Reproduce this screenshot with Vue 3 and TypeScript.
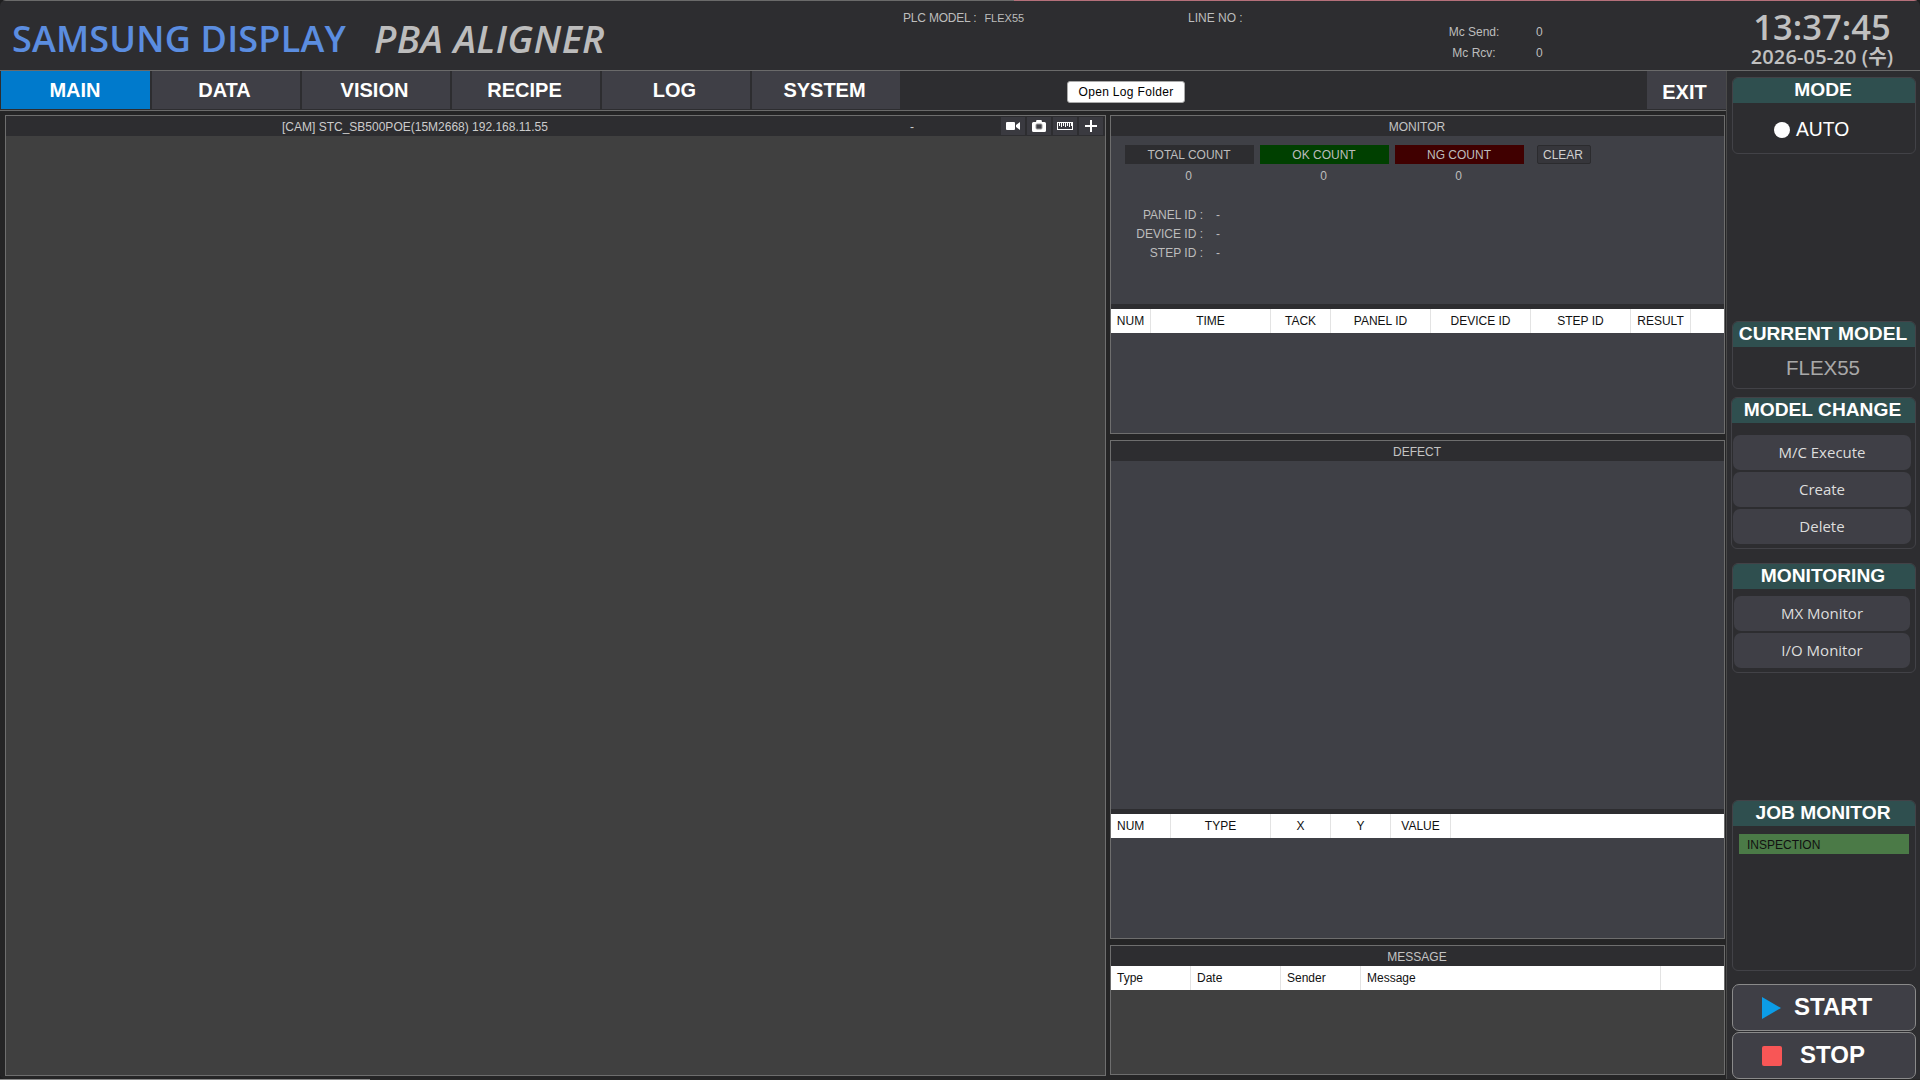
<script setup lang="ts">
const tabs = ["MAIN", "DATA", "VISION", "RECIPE", "LOG", "SYSTEM"];

const counts = [
  { label: "TOTAL COUNT", cls: "total" },
  { label: "OK COUNT", cls: "ok" },
  { label: "NG COUNT", cls: "ng" },
];

const idRows = ["PANEL ID :", "DEVICE ID :", "STEP ID :"];

interface Col {
  label: string;
  width: number;
  left?: boolean;
}

const monitorCols: Col[] = [
  { label: "NUM", width: 40 },
  { label: "TIME", width: 120 },
  { label: "TACK", width: 60 },
  { label: "PANEL ID", width: 100 },
  { label: "DEVICE ID", width: 100 },
  { label: "STEP ID", width: 100 },
  { label: "RESULT", width: 60 },
];

const defectCols: Col[] = [
  { label: "NUM", width: 60, left: true },
  { label: "TYPE", width: 100 },
  { label: "X", width: 60 },
  { label: "Y", width: 60 },
  { label: "VALUE", width: 60 },
];

const messageCols: Col[] = [
  { label: "Type", width: 80, left: true },
  { label: "Date", width: 90, left: true },
  { label: "Sender", width: 80, left: true },
  { label: "Message", width: 300, left: true },
];

const rulerTicks = [2, 4, 6, 8, 10, 12, 14];
</script>

<template>
  <div class="screen">
    <div class="window">
      <div class="topline"><i class="grey"></i><i class="pink"></i></div>

      <header class="header">
        <div class="brand">SAMSUNG DISPLAY</div>
        <div class="product">PBA ALIGNER</div>
        <div class="plc"><span class="plcLabel">PLC MODEL :</span><span class="plcValue">FLEX55</span></div>
        <div class="line">LINE NO :</div>
        <div class="mc">
          <div class="mcRow"><span class="mcLabel">Mc Send:</span><span>0</span></div>
          <div class="mcRow"><span class="mcLabel">Mc Rcv:</span><span>0</span></div>
        </div>
        <div class="clock">
          <div class="time">13:37:45</div>
          <div class="date">2026-05-20 (수)</div>
        </div>
      </header>

      <div class="main">
        <div class="left">
          <nav class="nav">
            <div v-for="(t, i) in tabs" :key="t" class="tab" :class="{ active: i === 0 }">{{ t }}</div>
            <div class="navMid"><button class="logBtn">Open Log Folder</button></div>
            <div class="exit">EXIT</div>
          </nav>

          <div class="body">
            <section class="panel cam">
              <div class="camBar">
                <span class="camName">[CAM] STC_SB500POE(15M2668) 192.168.11.55</span>
                <span class="camDash">-</span>
                <div class="camTools">
                  <div class="tool">
                    <svg width="14" height="8" viewBox="0 0 14 8"><rect x="0" y="0" width="9" height="8" rx="1" fill="#fff" /><path d="M10 3 L14 0 V8 L10 5 Z" fill="#fff" /></svg>
                  </div>
                  <div class="tool">
                    <svg width="14" height="12" viewBox="0 0 14 12"><path d="M1.5 2 H4 L4.5 0 H9.5 L10 2 H12.5 Q14 2 14 3.5 V10.5 Q14 12 12.5 12 H1.5 Q0 12 0 10.5 V3.5 Q0 2 1.5 2 Z" fill="#fff" /><rect x="4" y="4" width="6" height="5" rx="1" fill="#3f3f46" stroke="#999" /></svg>
                  </div>
                  <div class="tool">
                    <svg width="16" height="8" viewBox="0 0 16 8"><rect x="0.5" y="0.5" width="15" height="7" fill="none" stroke="#fff" /><path v-for="x in rulerTicks" :key="x" :d="`M${x + 0.5} 1 V${x % 4 === 0 ? 5 : 4}`" stroke="#fff" /></svg>
                  </div>
                  <div class="tool">
                    <svg width="12" height="12" viewBox="0 0 12 12"><path d="M6 0 V12 M0 6 H12" stroke="#fff" stroke-width="2" /></svg>
                  </div>
                </div>
              </div>
              <div class="camView"></div>
            </section>

            <div class="stack">
              <section class="panel monitor">
                <div class="title">MONITOR</div>
                <div class="monitorBody">
                  <div class="countRow">
                    <div v-for="c in counts" :key="c.label" class="count">
                      <div class="countHead" :class="c.cls">{{ c.label }}</div>
                      <div class="countVal">0</div>
                    </div>
                    <button class="clear">CLEAR</button>
                  </div>
                  <div class="ids">
                    <div v-for="r in idRows" :key="r" class="idRow">
                      <span class="idLabel">{{ r }}</span><span>-</span>
                    </div>
                  </div>
                </div>
                <div class="strip"></div>
                <div class="thead">
                  <div v-for="c in monitorCols" :key="c.label" class="th" :style="{ width: c.width + 'px' }">{{ c.label }}</div>
                </div>
                <div class="fill"></div>
              </section>

              <section class="panel defect">
                <div class="title">DEFECT</div>
                <div class="defectView"></div>
                <div class="strip"></div>
                <div class="thead">
                  <div v-for="c in defectCols" :key="c.label" class="th" :class="{ thLeft: c.left }" :style="{ width: c.width + 'px' }">{{ c.label }}</div>
                </div>
                <div class="fill"></div>
              </section>

              <section class="panel message">
                <div class="title">MESSAGE</div>
                <div class="thead">
                  <div v-for="c in messageCols" :key="c.label" class="th thLeft" :style="{ width: c.width + 'px' }">{{ c.label }}</div>
                </div>
                <div class="fill grey"></div>
              </section>
            </div>
          </div>
        </div>

        <aside class="side">
          <div class="group mode">
            <div class="groupHead">MODE</div>
            <div class="auto"><i class="dot"></i>AUTO</div>
          </div>

          <div class="group current">
            <div class="groupHead">CURRENT MODEL</div>
            <div class="modelName">FLEX55</div>
          </div>

          <div class="group change">
            <div class="groupHead">MODEL CHANGE</div>
            <div class="btns">
              <button class="sideBtn">M/C Execute</button>
              <button class="sideBtn">Create</button>
              <button class="sideBtn">Delete</button>
            </div>
          </div>

          <div class="group monitoring">
            <div class="groupHead">MONITORING</div>
            <div class="btns">
              <button class="sideBtn">MX Monitor</button>
              <button class="sideBtn">I/O Monitor</button>
            </div>
          </div>

          <div class="group job">
            <div class="groupHead">JOB MONITOR</div>
            <div class="jobBar">INSPECTION</div>
          </div>

          <div class="actions">
            <button class="action">
              <svg width="19" height="22" viewBox="0 0 19 22"><path d="M0 0 L19 11 L0 22 Z" fill="#0c9ce6" /></svg>
              <span>START</span>
            </button>
            <button class="action stop">
              <i class="square"></i>
              <span>STOP</span>
            </button>
          </div>
        </aside>
      </div>
    </div>
    <div class="desktop"><i class="pale"></i></div>
  </div>
</template>

<style>
html,
body {
  margin: 0;
  background: #1f1f20;
}
</style>

<style scoped>
.screen {
  width: 1920px;
  height: 1080px;
  overflow: hidden;
  display: flex;
  flex-direction: column;
  font-family: "Liberation Sans", Arial, sans-serif;
  background: #1f1f20;
}

.window {
  flex: 1;
  min-height: 0;
  display: flex;
  flex-direction: column;
  background: #2d2d30;
  overflow: hidden;
  border-radius: 6px 6px 0 6px;
}

.desktop {
  height: 1px;
  display: flex;
  background: #262626;
}

.pale {
  width: 370px;
  background: #8a8a8a;
}

.topline {
  height: 1px;
  display: flex;
}

.topline .grey {
  width: 1014px;
  background: #6a6a6a;
}

.topline .pink {
  flex: 1;
  background: #b5707a;
}

.header {
  height: 69px;
  flex: none;
  display: flex;
  color: #bdbdbd;
  border-bottom: 1px solid #6a6a6a;
  box-sizing: content-box;
}

.brand {
  margin: 15px 0 0 12px;
  width: 362px;
  font: 600 36px/46px "Open Sans", sans-serif;
  letter-spacing: 0.2px;
  color: #5b8de0;
  white-space: nowrap;
}

.product {
  width: 529px;
  margin-top: 14px;
  font: italic 600 38px/46px "Open Sans", sans-serif;
  letter-spacing: 0.35px;
  color: #bcbcbc;
  white-space: nowrap;
}

.plc {
  width: 285px;
  margin-top: 10px;
  font-size: 12px;
  line-height: 14px;
  white-space: nowrap;
}

.plcLabel {
  letter-spacing: -0.2px;
}

.plcValue {
  margin-left: 8px;
  font-size: 11px;
}

.line {
  width: 260px;
  margin-top: 10px;
  font-size: 12px;
  line-height: 14px;
}

.mc {
  width: 302px;
  margin-top: 24px;
  font-size: 12px;
}

.mcRow {
  height: 21px;
  display: flex;
  line-height: 14px;
}

.mcLabel {
  width: 60px;
  text-align: center;
  margin-right: 32px;
  flex: none;
  margin-left: -4px;
}

.clock {
  flex: 1;
  text-align: center;
  margin-left: -26px;
  margin-top: 8px;
  color: #c0c0c0;
  font-family: "Open Sans", "Noto Sans CJK KR", sans-serif;
  font-weight: 600;
}

.time {
  font-size: 34.5px;
  line-height: 36px;
}

.date {
  font-size: 20px;
  line-height: 24px;
  letter-spacing: 0.15px;
  white-space: nowrap;
}

.main {
  flex: 1;
  min-height: 0;
  display: flex;
}

.left {
  width: 1727px;
  flex: none;
  display: flex;
  flex-direction: column;
  background: #252526;
  border-right: 1px solid #4a4a4a;
  box-sizing: border-box;
}

.nav {
  height: 40px;
  flex: none;
  display: flex;
  padding: 0 0 0 1px;
  gap: 2px;
  box-sizing: border-box;
  background: #2d2d30;
  border-bottom: 1px solid #6a6a6a;
}

.tab {
  width: 148px;
  height: 38px;
  box-sizing: border-box;
  padding-right: 3px;
  background: #3f3f46;
  color: #fff;
  font-size: 20px;
  font-weight: 700;
  line-height: 38px;
  text-align: center;
}

.tab.active {
  width: 149px;
  padding-right: 1px;
  background: #007acc;
}

.navMid {
  width: 743px;
  display: flex;
  padding: 10px 0 0 165px;
  box-sizing: border-box;
  align-items: flex-start;
}

.logBtn {
  width: 118px;
  height: 22px;
  padding: 0;
  background: #fff;
  border: 1px solid #aaa;
  border-radius: 3px;
  color: #000;
  font: 12px "Liberation Sans", Arial, sans-serif;
  letter-spacing: 0.33px;
}

.exit {
  width: 79px;
  height: 38px;
  box-sizing: border-box;
  padding-right: 4px;
  background: #3f3f46;
  color: #fff;
  font-size: 20px;
  font-weight: 700;
  line-height: 42px;
  text-align: center;
}

.body {
  flex: 1;
  min-height: 0;
  display: flex;
  gap: 4px;
  padding: 4px 1px 3px 5px;
}

.panel {
  display: flex;
  flex-direction: column;
  border: 1px solid #6e6e6e;
  background: #3f4046;
  box-sizing: border-box;
}

.cam {
  width: 1101px;
  flex: none;
}

.camBar {
  height: 20px;
  flex: none;
  display: flex;
  align-items: center;
  background: #2d2d30;
  color: #ccc;
  font-size: 12px;
}

.camName {
  width: 820px;
  padding: 1px 0 0 276px;
  box-sizing: border-box;
  white-space: nowrap;
}

.camDash {
  width: 175px;
  padding: 1px 0 0 84px;
  box-sizing: border-box;
}

.camTools {
  display: flex;
  gap: 2px;
}

.tool {
  width: 24px;
  height: 18px;
  background: #3a3a40;
  display: flex;
  align-items: center;
  justify-content: center;
}

.camView {
  flex: 1;
  background: #404040;
}

.stack {
  width: 615px;
  flex: none;
  display: flex;
  flex-direction: column;
  gap: 6px;
}

.monitor {
  height: 319px;
  flex: none;
}

.defect {
  height: 499px;
  flex: none;
}

.message {
  height: 130px;
  flex: none;
}

.title {
  height: 20px;
  flex: none;
  box-sizing: border-box;
  padding-right: 1px;
  background: #2d2d30;
  color: #c4c4c4;
  font-size: 12px;
  line-height: 22px;
  text-align: center;
}

.monitorBody {
  height: 168px;
  flex: none;
  box-sizing: border-box;
  padding: 9px 0 0 14px;
  color: #bdbdbd;
  font-size: 12px;
}

.countRow {
  display: flex;
  gap: 6px;
  align-items: flex-start;
}

.count {
  width: 129px;
}

.countHead {
  height: 19px;
  box-sizing: border-box;
  padding-right: 1px;
  line-height: 20px;
  text-align: center;
}

.countHead.total {
  background: #2d2d30;
}

.countHead.ok {
  background: #004000;
}

.countHead.ng {
  background: #400000;
}

.countVal {
  height: 21px;
  box-sizing: border-box;
  padding-right: 2px;
  line-height: 24px;
  text-align: center;
}

.clear {
  width: 54px;
  height: 19px;
  padding: 0 2px 0 0;
  margin-left: 7px;
  background: #36363b;
  border: 1px solid #2b2b2e;
  border-radius: 2px;
  color: #d0d0d0;
  font: 12px "Liberation Sans", Arial, sans-serif;
}

.ids {
  margin-top: 21px;
}

.idRow {
  height: 19px;
  display: flex;
  line-height: 19px;
}

.idLabel {
  width: 78px;
  margin-right: 13px;
  text-align: right;
  white-space: nowrap;
}

.defectView {
  height: 348px;
  flex: none;
}

.strip {
  height: 5px;
  flex: none;
  background: #2d2d30;
}

.thead {
  height: 24px;
  flex: none;
  display: flex;
  background: #fff;
}

.th {
  box-sizing: border-box;
  border-right: 1px solid #e3e3e3;
  color: #111;
  font-size: 12px;
  line-height: 24px;
  text-align: center;
  flex: none;
}

.thLeft {
  text-align: left;
  padding-left: 6px;
}

.fill {
  flex: 1;
  min-height: 0;
}

.fill.grey {
  background: #404040;
}

.auto {
  display: flex;
  align-items: center;
  padding: 3px 0 0 41px;
  color: #fff;
  font: 19.3px "Liberation Sans", Arial, sans-serif;
  flex: 1;
}

.dot {
  width: 16px;
  height: 16px;
  border-radius: 50%;
  background: #fff;
  margin-right: 6px;
}

.side {
  flex: 1;
  display: flex;
  flex-direction: column;
  padding-left: 5px;
  padding-right: 4px;
  background: #2d2d30;
}

.group {
  box-sizing: border-box;
  border: 1px solid #424247;
  border-radius: 6px;
  overflow: hidden;
  flex: none;
  display: flex;
  flex-direction: column;
}

.groupHead {
  height: 25px;
  flex: none;
  box-sizing: border-box;
  padding-right: 2px;
  background: #2f4f4f;
  color: #fff;
  font-size: 19.2px;
  font-weight: 700;
  line-height: 24px;
  text-align: center;
  white-space: nowrap;
}

.mode {
  height: 77px;
  margin-top: 6px;
}

.current {
  height: 68px;
  margin-top: 167px;
}

.modelName {
  padding-right: 2px;
  color: #a8a8a8;
  font-size: 20.5px;
  line-height: 41px;
  text-align: center;
}

.change {
  height: 152px;
  margin-top: 8px;
  margin-left: -1px;
}

.change .btns {
  padding-top: 12px;
}

.monitoring {
  height: 110px;
  margin-top: 14px;
}

.monitoring .btns {
  padding-top: 7px;
  padding-right: 5px;
}

.btns {
  display: flex;
  flex-direction: column;
  gap: 2px;
  padding: 0 4px 0 1px;
}

.sideBtn {
  height: 35px;
  padding: 0 0 2px;
  background: #3f3f46;
  border: 0;
  border-radius: 7px;
  color: #ddd;
  font: 15px "Open Sans", sans-serif;
}

.job {
  height: 171px;
  margin-top: 127px;
}

.jobBar {
  margin: 8px 6px 0;
  height: 20px;
  background: #4b7a47;
  color: #111;
  font-size: 12px;
  line-height: 23px;
  padding-left: 8px;
}

.actions {
  margin-top: 13px;
  display: flex;
  flex-direction: column;
  gap: 1px;
}

.action {
  height: 47px;
  padding: 0 0 1px 29px;
  display: flex;
  align-items: center;
  gap: 13px;
  background: #3f3f46;
  border: 1px solid #8a8a8a;
  border-radius: 7px;
  color: #fff;
  font: 700 24px "Liberation Sans", Arial, sans-serif;
}

.action svg {
  margin-top: 2px;
}

.action.stop {
  gap: 18px;
}

.square {
  width: 20px;
  height: 20px;
  border-radius: 2px;
  background: #f85656;
  margin-top: 2px;
}
</style>
